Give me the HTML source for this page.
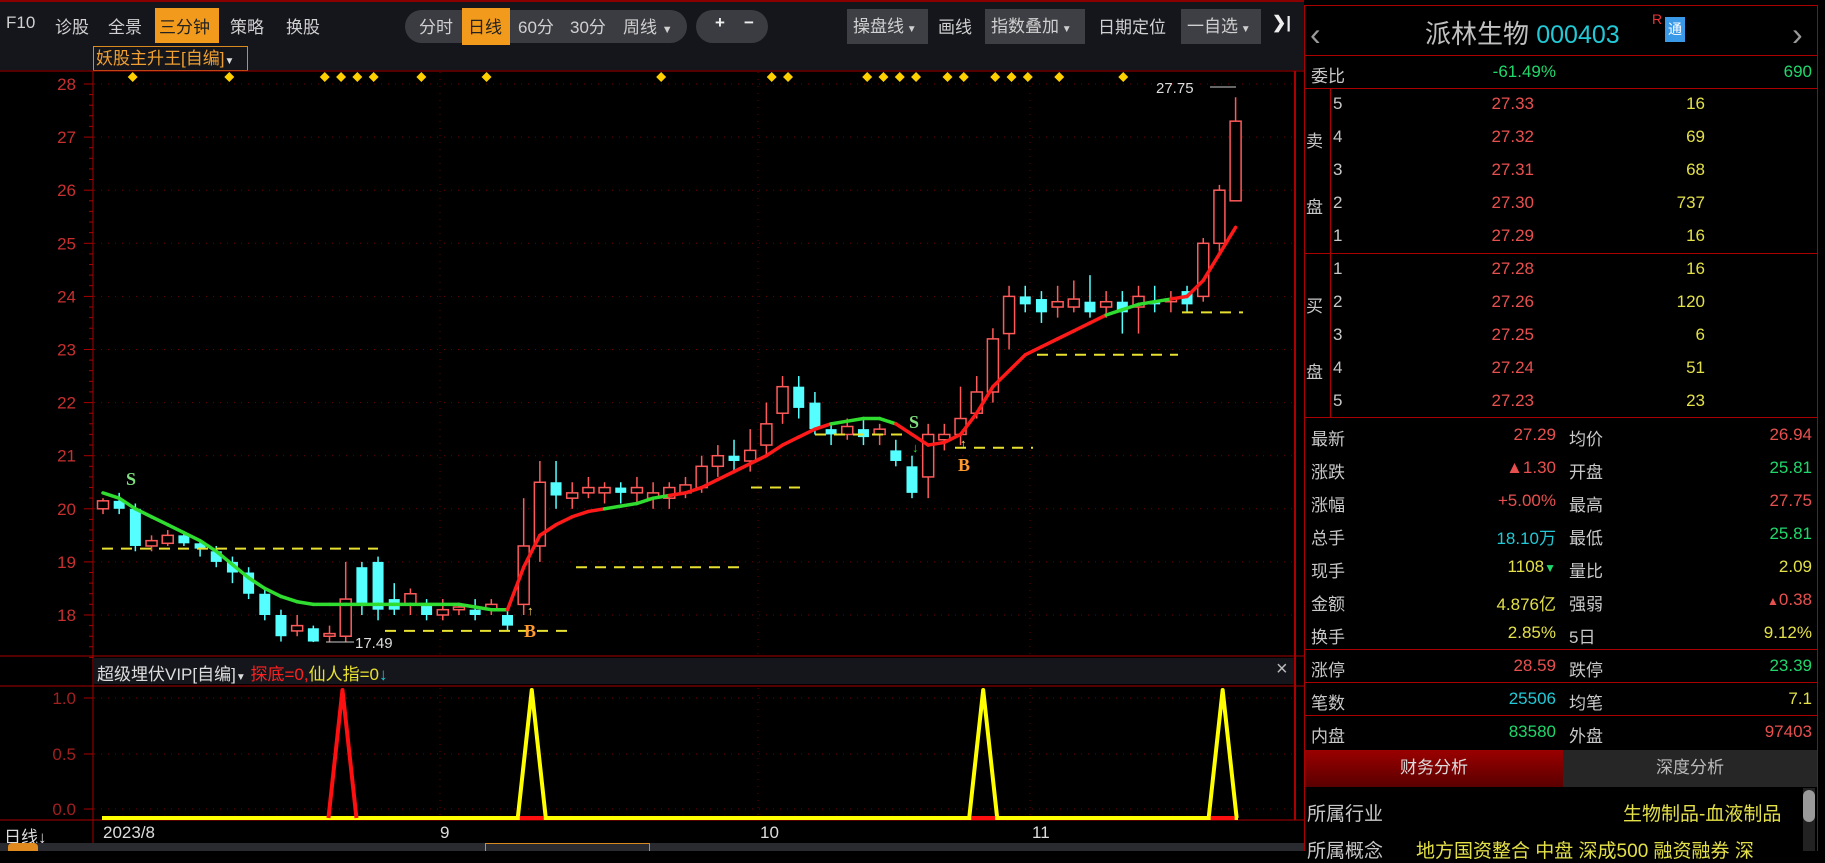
<!DOCTYPE html>
<html><head><meta charset="utf-8">
<style>
*{margin:0;padding:0;box-sizing:border-box}
body{width:1825px;height:851px;background:#000;overflow:hidden;position:relative;font-family:"Liberation Sans","Noto Sans CJK SC",sans-serif;color:#c8c8c8}
.abs{position:absolute;white-space:nowrap}
#tb{position:absolute;left:0;top:0;width:1304px;height:70px;background:#15161c;border-top:2px solid #8a0000}
.ti{position:absolute;top:11px;font-size:17px;color:#d0d0d0}
.pill{position:absolute;top:8px;height:33px;background:#3b3c41;border-radius:17px}
.gbtn{position:absolute;top:7px;height:35px;background:#3e3f44;font-size:17px;color:#d0d0d0;line-height:35px;padding-left:6px}
.rp{position:absolute;left:1304px;width:514px;border-left:1px solid #a00;border-right:1px solid #a00}
.r{position:absolute;font-size:17px;white-space:nowrap}
.red{color:#e8504f}.grn{color:#1fd86c}.yel{color:#e3e048}.cy{color:#22c9d6}
</style></head><body>
<div id="tb">
<span class="ti" style="left:6px">F10</span>
<span class="ti" style="left:55px">诊股</span>
<span class="ti" style="left:108px">全景</span>
<div class="abs" style="left:155px;top:6px;width:64px;height:35px;background:#f29a1c"></div>
<span class="ti" style="left:159px;color:#222">三分钟</span>
<span class="ti" style="left:230px">策略</span>
<span class="ti" style="left:286px">换股</span>
<div class="pill" style="left:405px;width:282px"></div>
<div class="abs" style="left:462px;top:6px;width:48px;height:37px;background:#f29a1c"></div>
<span class="ti" style="left:419px">分时</span>
<span class="ti" style="left:468px;color:#222">日线</span>
<span class="ti" style="left:518px">60分</span>
<span class="ti" style="left:570px">30分</span>
<span class="ti" style="left:623px">周线 <span style="font-size:11px">▼</span></span>
<div class="pill" style="left:696px;width:72px"></div>
<span class="ti" style="left:715px;font-weight:bold;color:#eee">+</span>
<span class="ti" style="left:744px;font-weight:bold;color:#eee">−</span>
<div class="gbtn" style="left:847px;width:81px">操盘线<span style="font-size:10px"> ▼</span></div>
<span class="ti" style="left:938px">画线</span>
<div class="gbtn" style="left:985px;width:100px">指数叠加<span style="font-size:10px"> ▼</span></div>
<span class="ti" style="left:1098px">日期定位</span>
<div class="gbtn" style="left:1181px;width:80px">一自选<span style="font-size:10px"> ▼</span></div>
<span class="ti" style="left:1272px;font-weight:bold;color:#eee">❯|</span>
<div class="abs" style="left:93px;top:44px;width:155px;height:25px;border:1px solid #d88a20;color:#f0a030;font-size:17px;line-height:23px;padding-left:2px">妖股主升王[自编]<span style="font-size:10px;color:#ddd">▼</span></div>
</div>
<svg id="ch" class="abs" style="left:0;top:0" width="1304" height="851"></svg>
<div class="abs" style="left:94px;top:658px;width:1200px;height:26px;background:#15161c"></div>
<div class="abs" style="left:97px;top:660px;font-size:17px;color:#ddd">超级埋伏VIP[自编]<span style="font-size:10px">▼</span> <span style="color:#ff2020">探底=0,</span><span style="color:#e8e030">仙人指=0</span><span style="color:#22c9d6">↓</span></div>
<div class="abs" style="left:1276px;top:658px;font-size:20px;color:#bbb">×</div>
<div class="abs" style="left:4px;top:823px;font-size:17px;color:#ddd">日线<b>↓</b></div>
<div class="abs" style="left:103px;top:823px;font-size:17px;color:#ddd">2023/8</div>
<div class="abs" style="left:440px;top:823px;font-size:17px;color:#ddd">9</div>
<div class="abs" style="left:760px;top:823px;font-size:17px;color:#ddd">10</div>
<div class="abs" style="left:1032px;top:823px;font-size:17px;color:#ddd">11</div>
<div class="abs" style="left:0;top:843px;width:1304px;height:8px;background:#2a2b30"></div>
<div class="abs" style="left:8px;top:843px;width:30px;height:8px;background:#e08a20;border-radius:4px 4px 0 0"></div>
<div class="abs" style="left:485px;top:843px;width:165px;height:8px;border:1px solid #d88a20;border-bottom:0"></div>

<div class="rp" style="top:5px;height:846px;background:#000"></div>
<div class="abs" style="left:1304px;top:5px;width:514px;height:1px;background:#a00"></div>
<div class="abs" style="left:1310px;top:16px;font-size:32px;color:#999">‹</div>
<div class="abs" style="left:1792px;top:16px;font-size:32px;color:#999">›</div>
<div class="abs" style="left:1425px;top:14px;font-size:26px;color:#c0c0c0">派林生物 <span class="cy" style="font-size:25px">000403</span></div>
<div class="abs" style="left:1652px;top:11px;font-size:14px;color:#e33">R</div>
<div class="abs" style="left:1665px;top:17px;width:20px;height:25px;background:#3a9ae8;color:#fff;font-size:14px;text-align:center;line-height:25px">通</div>
<div class="abs" style="left:1304px;top:55px;width:514px;height:1px;background:#a00"></div>
<div class="r" style="left:1311px;top:62px">委比</div>
<div class="r grn" style="right:269px;top:62px">-61.49%</div>
<div class="r grn" style="right:13px;top:62px">690</div>
<div class="abs" style="left:1304px;top:88px;width:514px;height:1px;background:#a00"></div>
<div class="abs" style="left:1330px;top:88px;width:1px;height:330px;background:#a00"></div>
<div class="abs" style="left:1304px;top:253px;width:514px;height:1px;background:#a00"></div>
<div class="abs" style="left:1304px;top:417px;width:514px;height:1px;background:#a00"></div>
<div id="ob"></div>
<div id="st"></div>
<div class="abs" style="left:1304px;top:649px;width:514px;height:1px;background:#a00"></div>
<div class="abs" style="left:1304px;top:682px;width:514px;height:1px;background:#a00"></div>
<div class="abs" style="left:1304px;top:715px;width:514px;height:1px;background:#a00"></div>
<div class="abs" style="left:1305px;top:750px;width:258px;height:37px;background:linear-gradient(#9a0000,#5a0000);color:#ddd;font-size:17px;text-align:center;line-height:36px">财务分析</div>
<div class="abs" style="left:1563px;top:750px;width:254px;height:37px;background:#262626;color:#bbb;font-size:17px;text-align:center;line-height:36px">深度分析</div>
<div class="r" style="left:1307px;top:799px;font-size:19px">所属行业</div>
<div class="r yel" style="left:1623px;top:799px;font-size:19px">生物制品-血液制品</div>
<div class="r" style="left:1307px;top:836px;font-size:19px">所属概念</div>
<div class="r yel" style="left:1416px;top:836px;font-size:19px">地方国资整合 中盘 深成500 融资融券 深</div>
<div class="abs" style="left:1803px;top:788px;width:12px;height:63px;background:#222"></div>
<div class="abs" style="left:1803px;top:790px;width:12px;height:32px;background:#999;border-radius:6px"></div>
<script>
var ob=document.getElementById('ob'),h='';
var sell=[['5','27.33','16'],['4','27.32','69'],['3','27.31','68'],['2','27.30','737'],['1','27.29','16']];
var buy=[['1','27.28','16'],['2','27.26','120'],['3','27.25','6'],['4','27.24','51'],['5','27.23','23']];
function rows(a,y0){a.forEach(function(r,i){var y=y0+i*33;h+='<div class="r" style="left:1333px;top:'+y+'px">'+r[0]+'</div><div class="r red" style="right:291px;top:'+y+'px">'+r[1]+'</div><div class="r yel" style="right:120px;top:'+y+'px">'+r[2]+'</div>';});}
rows(sell,94);rows(buy,259);
h+='<div class="r" style="left:1306px;top:127px">卖</div><div class="r" style="left:1306px;top:193px">盘</div><div class="r" style="left:1306px;top:292px">买</div><div class="r" style="left:1306px;top:358px">盘</div>';
ob.innerHTML=h;
var st=[['最新','27.29','red','均价','26.94','red'],['涨跌','▲1.30','red','开盘','25.81','grn'],['涨幅','+5.00%','red','最高','27.75','red'],['总手','18.10万','cy','最低','25.81','grn'],['现手','1108<span class=grn style="font-size:12px">▼</span>','yel','量比','2.09','yel'],['金额','4.876亿','yel','强弱','<span style="font-size:12px">▲</span>0.38','red'],['换手','2.85%','yel','5日','9.12%','yel'],['涨停','28.59','red','跌停','23.39','grn'],['笔数','25506','cy','均笔','7.1','yel'],['内盘','83580','grn','外盘','97403','red']];
h='';st.forEach(function(r,i){var y=425+i*33;h+='<div class="r" style="left:1311px;top:'+y+'px">'+r[0]+'</div><div class="r '+r[2]+'" style="right:269px;top:'+y+'px">'+r[1]+'</div><div class="r" style="left:1569px;top:'+y+'px">'+r[3]+'</div><div class="r '+r[5]+'" style="right:13px;top:'+y+'px">'+r[4]+'</div>';});
document.getElementById('st').innerHTML=h;

var s='';
function Y(p){return 84+(28-p)*53.1}
function X(i){return 103+i*16.18}
s+='<line x1="0" y1="71" x2="1304" y2="71" stroke="#a00"/>';
s+='<line x1="93" y1="71" x2="93" y2="843" stroke="#a00"/>';
s+='<line x1="1295" y1="71" x2="1295" y2="820" stroke="#a00" stroke-width="2"/>';
s+='<line x1="0" y1="656" x2="1304" y2="656" stroke="#a00"/><line x1="0" y1="686" x2="1304" y2="686" stroke="#a00"/><line x1="0" y1="820" x2="1304" y2="820" stroke="#a00"/>';
for(var p=18;p<=28;p++){var y=Y(p);s+='<line x1="94" y1="'+y+'" x2="1294" y2="'+y+'" stroke="#6a0000" stroke-dasharray="1,6"/>';s+='<line x1="84" y1="'+y+'" x2="93" y2="'+y+'" stroke="#a00"/><text x="76" y="'+(y+6)+'" fill="#c83030" font-size="17" text-anchor="end">'+p+'</text>';
for(var k=1;k<5;k++){s+='<line x1="89" y1="'+(y+k*10.6)+'" x2="93" y2="'+(y+k*10.6)+'" stroke="#a00"/>';}}
[440,758,1030].forEach(function(x){s+='<line x1="'+x+'" y1="72" x2="'+x+'" y2="820" stroke="#6a0000" stroke-dasharray="1,6"/>';});
[[1,698],[0.5,754],[0,809]].forEach(function(a){s+='<line x1="94" y1="'+a[1]+'" x2="1294" y2="'+a[1]+'" stroke="#6a0000" stroke-dasharray="1,6"/><line x1="84" y1="'+a[1]+'" x2="93" y2="'+a[1]+'" stroke="#a00"/><text x="76" y="'+(a[1]+6)+'" fill="#a02020" font-size="17" text-anchor="end">'+a[0].toFixed(1)+'</text>';});
var C=[[20.0,20.15,20.2,19.9],[20.15,20.0,20.3,19.9],[20.0,19.3,20.1,19.2],[19.3,19.4,19.5,19.2],[19.35,19.5,19.6,19.3],[19.5,19.35,19.55,19.3],[19.35,19.25,19.4,19.1],[19.2,19.0,19.3,18.9],[19.0,18.8,19.1,18.6],[18.8,18.4,18.9,18.3],[18.4,18.0,18.5,17.9],[18.0,17.6,18.1,17.5],[17.7,17.8,18.0,17.6],[17.75,17.5,17.8,17.49],[17.6,17.65,17.8,17.5],[17.6,18.3,19.0,17.5],[18.9,18.2,19.0,18.0],[19.0,18.1,19.1,17.9],[18.3,18.1,18.6,18.0],[18.2,18.4,18.5,18.0],[18.2,18.0,18.3,17.9],[18.0,18.1,18.3,17.9],[18.1,18.15,18.2,18.0],[18.1,18.0,18.3,17.9],[18.1,18.2,18.3,18.0],[18.0,17.8,18.1,17.7],[18.2,19.3,20.2,18.0],[19.3,20.5,20.9,19.0],[20.5,20.25,20.9,20.0],[20.2,20.3,20.5,20.0],[20.3,20.4,20.6,20.2],[20.3,20.4,20.5,20.1],[20.4,20.3,20.5,20.1],[20.3,20.4,20.6,20.1],[20.2,20.3,20.5,20.0],[20.2,20.4,20.5,20.0],[20.3,20.45,20.6,20.2],[20.4,20.8,21.0,20.3],[20.8,21.0,21.2,20.6],[21.0,20.9,21.3,20.7],[20.9,21.1,21.5,20.7],[21.2,21.6,22.0,21.0],[21.8,22.3,22.5,21.6],[22.3,21.9,22.5,21.7],[22.0,21.5,22.2,21.4],[21.5,21.4,21.6,21.2],[21.4,21.55,21.7,21.3],[21.5,21.35,21.7,21.2],[21.4,21.5,21.6,21.2],[21.1,20.9,21.3,20.8],[20.8,20.3,21.0,20.2],[20.6,21.4,21.6,20.2],[21.3,21.4,21.6,21.1],[21.4,21.7,22.3,21.2],[21.8,22.2,22.5,21.7],[22.2,23.2,23.4,22.0],[23.3,24.0,24.2,23.0],[24.0,23.85,24.2,23.7],[23.95,23.7,24.1,23.5],[23.8,23.9,24.2,23.6],[23.8,23.95,24.3,23.7],[23.9,23.7,24.4,23.6],[23.8,23.9,24.1,23.6],[23.9,23.7,24.1,23.3],[23.8,24.0,24.2,23.3],[23.9,23.85,24.2,23.7],[23.9,23.95,24.1,23.7],[24.1,23.85,24.2,23.7],[24.0,25.0,25.1,23.9],[25.0,26.0,26.1,24.8],[25.8,27.3,27.75,25.8]];
C.forEach(function(c,i){var x=X(i),o=Y(c[0]),cl=Y(c[1]),hi=Y(c[2]),lo=Y(c[3]);var up=c[1]>=c[0];var t=Math.min(o,cl),b=Math.max(o,cl),hh=Math.max(b-t,1.5);
if(up){s+='<line x1="'+x+'" y1="'+hi+'" x2="'+x+'" y2="'+t+'" stroke="#ff5a5a" stroke-width="1.5"/><line x1="'+x+'" y1="'+b+'" x2="'+x+'" y2="'+lo+'" stroke="#ff5a5a" stroke-width="1.5"/><rect x="'+(x-5.5)+'" y="'+t+'" width="11" height="'+hh+'" fill="#000" stroke="#ff5a5a" stroke-width="1.5"/>';}
else{s+='<line x1="'+x+'" y1="'+hi+'" x2="'+x+'" y2="'+lo+'" stroke="#55ffff" stroke-width="1.5"/><rect x="'+(x-5.5)+'" y="'+t+'" width="11" height="'+hh+'" fill="#55ffff"/>';}});
var M=[20.3,20.2,20.0,19.85,19.7,19.55,19.4,19.2,18.95,18.7,18.5,18.35,18.25,18.2,18.2,18.2,18.2,18.2,18.2,18.2,18.2,18.2,18.2,18.15,18.1,18.1,18.9,19.5,19.7,19.85,19.95,20.0,20.05,20.1,20.2,20.25,20.3,20.4,20.55,20.7,20.85,21.0,21.2,21.35,21.5,21.6,21.65,21.7,21.7,21.6,21.4,21.2,21.25,21.4,21.8,22.3,22.6,22.9,23.05,23.2,23.35,23.5,23.65,23.75,23.85,23.9,23.95,24.0,24.3,24.8,25.3];
var G=[];M.forEach(function(v,i){G.push(i<=25||(i>=31&&i<=35)||(i>=45&&i<=49)||(i>=62&&i<=66))});
for(var i=0;i<M.length-1;i++){var col=G[i]&&G[i+1]?'#2fdc2f':'#ff1a1a';s+='<line x1="'+X(i)+'" y1="'+Y(M[i])+'" x2="'+X(i+1)+'" y2="'+Y(M[i+1])+'" stroke="'+col+'" stroke-width="3.5" stroke-linecap="round"/>';}
[[19.25,102,378],[17.7,385,570],[18.9,576,745],[20.4,751,800],[21.4,815,905],[21.15,955,1033],[22.9,1037,1178],[23.7,1182,1243]].forEach(function(d){s+='<line x1="'+d[1]+'" y1="'+Y(d[0])+'" x2="'+d[2]+'" y2="'+Y(d[0])+'" stroke="#e8e030" stroke-width="2" stroke-dasharray="11,8"/>';});
[114,197,279,293,307,321,362,418,568,663,677,745,759,773,787,814,828,855,869,883,910,965].forEach(function(d){var x=d*1.164,y=77;s+='<polygon points="'+x+','+(y-5)+' '+(x+5)+','+y+' '+x+','+(y+5)+' '+(x-5)+','+y+'" fill="#ffd000"/>';});
s+='<text x="126" y="485" fill="#7fe07f" font-size="18" font-weight="bold" font-family="Liberation Serif">S</text>';
s+='<text x="909" y="428" fill="#7fe07f" font-size="18" font-weight="bold" font-family="Liberation Serif">S</text>';
s+='<text x="524" y="637" fill="#ff9a30" font-size="18" font-weight="bold" font-family="Liberation Serif">B</text>';
s+='<text x="958" y="471" fill="#ff9a30" font-size="18" font-weight="bold" font-family="Liberation Serif">B</text>';
s+='<text x="527" y="615" fill="#ffe060" font-size="13" font-weight="bold">↑</text><text x="960" y="448" fill="#ffe060" font-size="13" font-weight="bold">↑</text><text x="912" y="452" fill="#2fdc2f" font-size="13" font-weight="bold">↓</text>';
s+='<line x1="1210" y1="87" x2="1236" y2="87" stroke="#ccc"/><text x="1156" y="93" fill="#ddd" font-size="15">27.75</text>';
s+='<line x1="326" y1="642" x2="354" y2="642" stroke="#ccc"/><text x="355" y="648" fill="#ddd" font-size="15">17.49</text>';
s+='<line x1="102" y1="818" x2="1238" y2="818" stroke="#ffff00" stroke-width="4"/>';
function pk(i,col,base){var x=X(i);s+='<polyline points="'+(x-14)+',818 '+x+',690 '+(x+14)+',818" fill="none" stroke="'+col+'" stroke-width="4" stroke-linejoin="round"/>';if(base)s+='<line x1="'+(x-12)+'" y1="818" x2="'+(x+12)+'" y2="818" stroke="#ff1010" stroke-width="4"/>';}
pk(14.8,'#ff1010');pk(26.5,'#ffff00',1);pk(54.4,'#ffff00',1);pk(69.2,'#ffff00',1);
document.getElementById('ch').innerHTML=s;
</script>
</body></html>
